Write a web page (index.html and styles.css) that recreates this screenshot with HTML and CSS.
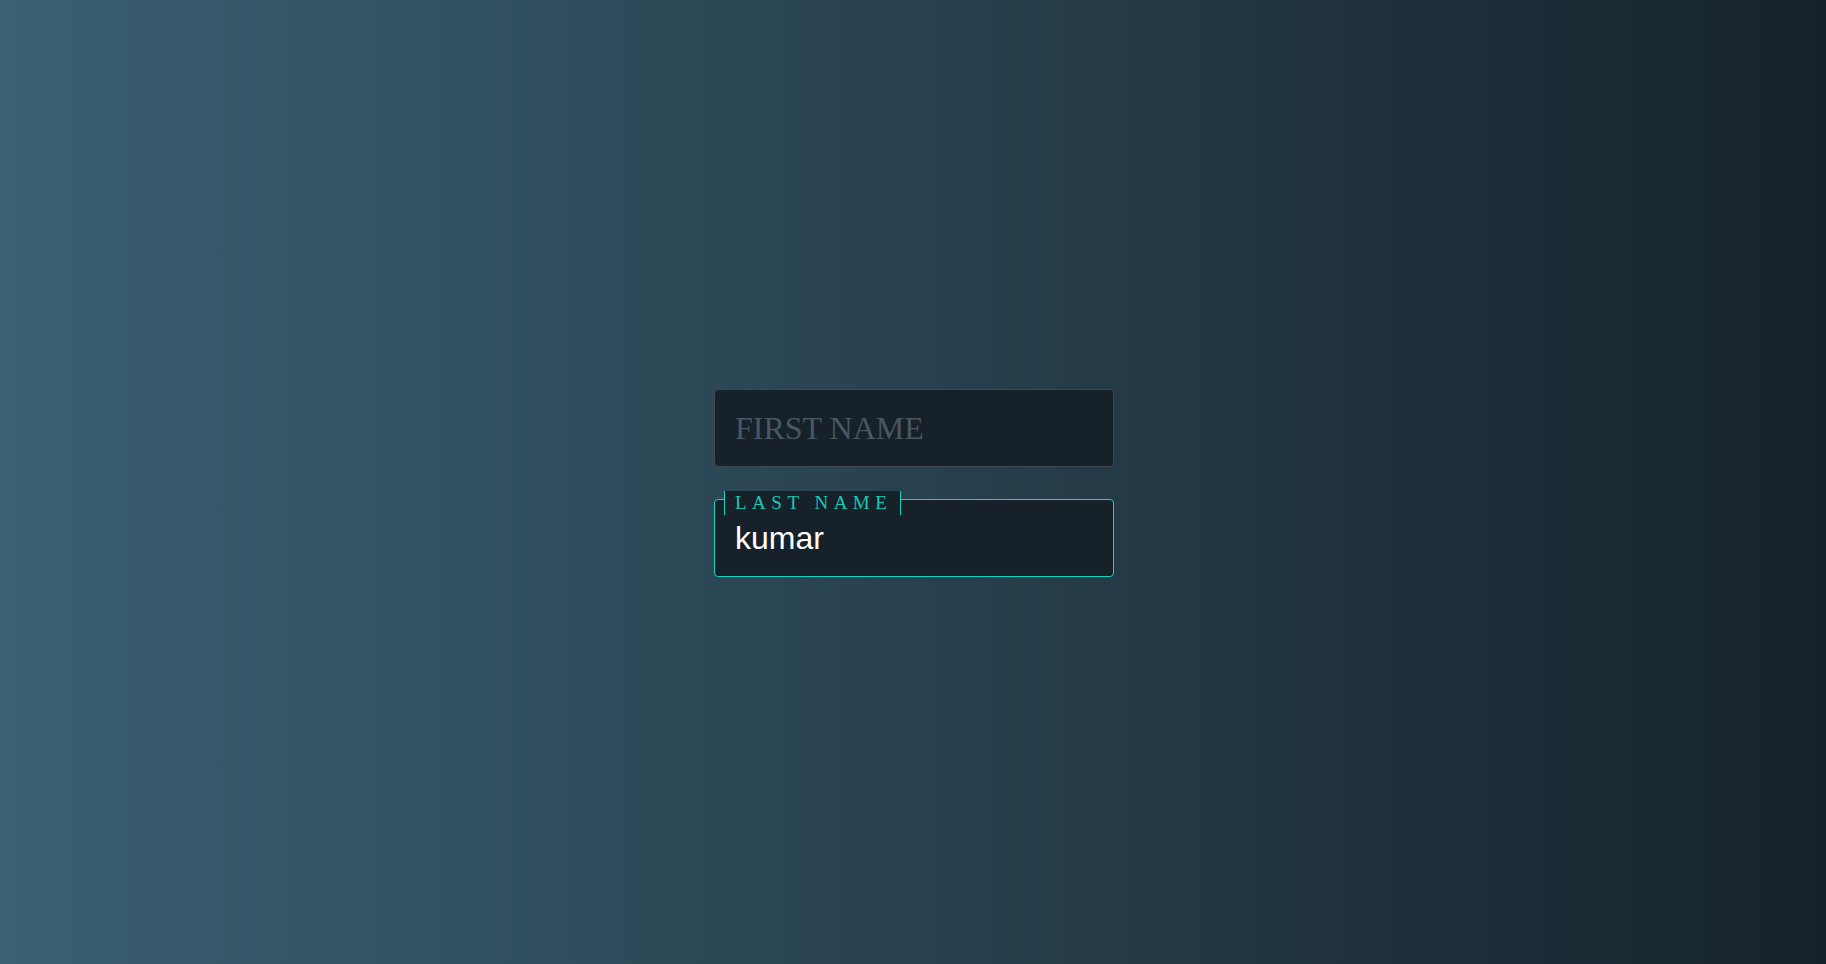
FILE: index.html
```html
<!DOCTYPE html>
<html lang="en">
<head>
<meta charset="utf-8">
<title>Name form</title>
<link rel="stylesheet" href="styles.css">
</head>
<body>
  <form class="form">
    <div class="field">
      <input class="field-input" type="text" placeholder="FIRST NAME">
    </div>
    <div class="field field-active">
      <label class="field-label">LAST NAME</label>
      <input class="field-input" type="text" value="kumar">
    </div>
  </form>
</body>
</html>
```
FILE: styles.css
```css
html, body {
  margin: 0;
  padding: 0;
  height: 100%;
}

body {
  background: linear-gradient(to right, #3a6073, #16222a);
  display: flex;
  align-items: center;
  justify-content: center;
  font-family: "Liberation Sans", Arial, sans-serif;
}

.form {
  display: flex;
  flex-direction: column;
  gap: 32px;
  padding: 2px 0 0 2px;
}

.field {
  position: relative;
  width: 400px;
}

.field-input {
  display: block;
  box-sizing: border-box;
  width: 400px;
  height: 78px;
  margin: 0;
  padding: 0 20px;
  background: #16212a;
  border: 1px solid #3c4852;
  border-radius: 4px;
  color: #ffffff;
  font-family: "Liberation Sans", Arial, sans-serif;
  font-size: 32px;
  outline: none;
}

.field-input::placeholder {
  font-family: "Liberation Serif", "Times New Roman", serif;
  color: #4a5661;
  opacity: 1;
}

.field-active .field-input {
  border-color: #12d6c2;
}

.field-label {
  position: absolute;
  left: 10px;
  top: -8px;
  height: 24px;
  box-sizing: border-box;
  padding: 0 8px 0 10px;
  background: #16212a;
  border-left: 1px solid #12d6c2;
  border-right: 1px solid #12d6c2;
  color: #12ccb6;
  font-family: "Liberation Serif", "Times New Roman", serif;
  font-size: 19px;
  letter-spacing: 5.5px;
  line-height: 24px;
  white-space: nowrap;
  z-index: 1;
}
```
